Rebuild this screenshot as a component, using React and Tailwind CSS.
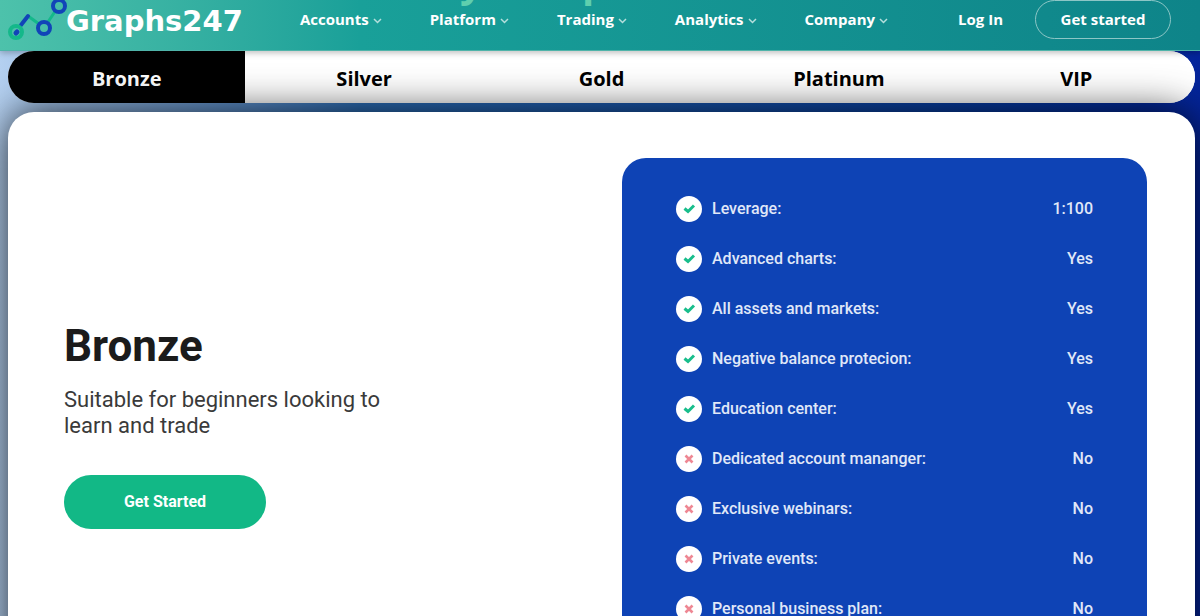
import React, { useState } from 'react';

const navItems = ['Accounts', 'Platform', 'Trading', 'Analytics', 'Company'];

const plans = ['Bronze', 'Silver', 'Gold', 'Platinum', 'VIP'];

const features = [
  { label: 'Leverage:', value: '1:100', included: true },
  { label: 'Advanced charts:', value: 'Yes', included: true },
  { label: 'All assets and markets:', value: 'Yes', included: true },
  { label: 'Negative balance protecion:', value: 'Yes', included: true },
  { label: 'Education center:', value: 'Yes', included: true },
  { label: 'Dedicated account mananger:', value: 'No', included: false },
  { label: 'Exclusive webinars:', value: 'No', included: false },
  { label: 'Private events:', value: 'No', included: false },
  { label: 'Personal business plan:', value: 'No', included: false },
];

const Logo = () => (
  <a href="#home" className="relative flex h-[42px] items-center text-white" aria-label="Graphs247">
    <svg width="58" height="42" viewBox="0 0 58 42" fill="none" className="overflow-visible" aria-hidden="true">
      <path d="M20 16L31 24M40 22L48 10" stroke="#14b88a" strokeWidth="3" />
      <path d="M13 25L20 16" stroke="#1144b8" strokeWidth="4" strokeLinecap="round" />
      <circle cx="8" cy="32" r="6" stroke="#14b88a" strokeWidth="4" />
      <path d="M8 33L9 32" stroke="#1144b8" strokeWidth="5" strokeLinecap="round" />
      <circle cx="36" cy="28" r="6" stroke="#1144b8" strokeWidth="4" />
      <circle cx="51" cy="6" r="6" stroke="#1144b8" strokeWidth="4" />
    </svg>
    <span className="font-['DejaVu_Sans',sans-serif] text-[29px] leading-[42px] font-bold">Graphs247</span>
  </a>
);

const Chevron = () => (
  <svg width="9" height="6" viewBox="0 0 9 6" fill="none" className="mt-1" aria-hidden="true">
    <path d="M1 1L4.5 4.5L8 1" stroke="#b5dfdc" strokeWidth="1.5" />
  </svg>
);

const Header = () => (
  <header className="relative z-20 h-[51px] overflow-hidden border-b border-[#4fb3a9] bg-linear-to-r from-[#4dc2ab] via-[#19a099] via-30% to-[#0e8489] shadow-[0_2px_6px_rgba(0,0,0,0.25)]">
    {/* tail of the hero heading behind the bar */}
    <div aria-hidden="true" className="font-['Open_Sans',sans-serif] text-[40px] leading-10 font-bold text-[#5fcfae]">
      <span className="absolute -top-[38px] left-[460px]">y</span>
      <span className="absolute -top-[38px] left-[582px]">p</span>
    </div>
    <div className="flex items-start justify-between pr-[29px] pl-2">
      <Logo />
      <nav className="relative flex h-[38px] items-center text-[15px] font-bold text-white">
        <div className="mr-[70px] flex gap-12">
          {navItems.map((item) => (
            <button key={item} type="button" className="flex items-center gap-1">
              {item}
              <Chevron />
            </button>
          ))}
        </div>
        <a href="#login" className="mr-8">Log In</a>
        <a href="#register" className="flex h-[39px] w-[136px] items-center justify-center rounded-full border border-[#8cc6c6]">
          Get started
        </a>
      </nav>
    </div>
  </header>
);

const StatusIcon = ({ included }) => (
  <svg width="26" height="26" viewBox="0 0 26 26" fill="none" aria-hidden="true">
    <circle cx="13" cy="13" r="13" fill="#fff" />
    {included ? (
      <path d="M8.5 12.5L12 15.5L18 9.5" stroke="#18bd8c" strokeWidth="3" />
    ) : (
      <path d="M9.5 9.5L16.5 16.5M16.5 9.5L9.5 16.5" stroke="#ee8793" strokeWidth="2.6" />
    )}
  </svg>
);

const FeatureList = () => (
  <ul className="w-[525px] rounded-3xl bg-[#0e43b5] px-[54px] pt-[26px] pb-[58px] text-base font-medium text-[#e0e8f8]">
    {features.map((feature) => (
      <li key={feature.label} className="flex h-[50px] items-center gap-[10px]">
        <StatusIcon included={feature.included} />
        <span>{feature.label}</span>
        <span className="ml-auto">{feature.value}</span>
      </li>
    ))}
  </ul>
);

const App = () => {
  const [plan, setPlan] = useState('Bronze');

  return (
    <div className="min-h-screen bg-linear-to-r from-[#b4d0f0] via-[#2d6fb8] via-30% to-[#04249a] font-['Open_Sans','Noto_Sans',sans-serif]">
      <Header />

      <main className="pr-[5px] pb-8 pl-2">
        <div role="tablist" className="flex overflow-hidden rounded-[26px] bg-white">
          {plans.map((name) => (
            <button
              key={name}
              type="button"
              role="tab"
              aria-selected={plan === name}
              onClick={() => setPlan(name)}
              className={`h-[52px] flex-1 pt-1 text-xl font-bold ${plan === name ? 'bg-black text-white' : 'bg-white text-black'}`}
            >
              {name}
            </button>
          ))}
        </div>

        <section className="relative mt-[9px] flex items-center justify-between rounded-[26px] bg-white py-[46px] pr-12 pl-14 font-[Roboto,sans-serif] shadow-[0_0_40px_rgba(0,0,0,0.8)]">
          <div className="w-[340px]">
            <h1 className="text-[44px] leading-[50px] font-bold text-[#1b1b1b]">{plan}</h1>
            <p className="mt-4 text-[22px] leading-[26px] text-[#3a3a3a]">
              Suitable for beginners looking to learn and trade
            </p>
            <button type="button" className="mt-9 h-[54px] w-[202px] rounded-full bg-[#12b886] text-base font-bold text-white">
              Get Started
            </button>
          </div>
          <FeatureList />
        </section>
      </main>
    </div>
  );
};

export default App;
